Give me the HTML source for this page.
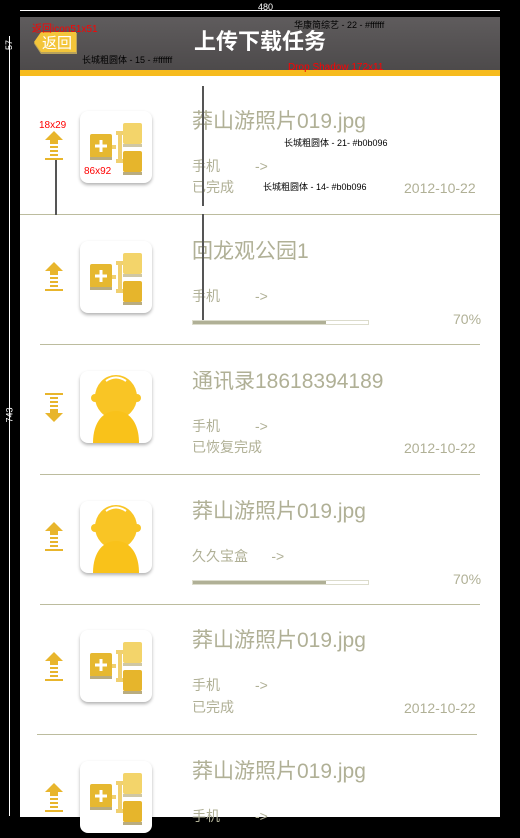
<!DOCTYPE html>
<html><head><meta charset="utf-8"><style>
*{margin:0;padding:0;box-sizing:border-box}
body{width:520px;height:817px;background:#000;position:relative;overflow:hidden;font-family:"Liberation Sans","Noto Sans CJK SC",sans-serif}
.a{position:absolute}
.panel{left:20px;top:76px;width:480px;height:741px;background:#fff}
.hdr{left:20px;top:17px;width:480px;height:53px;background:linear-gradient(#5f5c5d,#4d4a4b)}
.ybar{left:20px;top:70px;width:480px;height:6px;background:#f6bb1e}
.title{left:20px;top:27px;width:480px;text-align:center;color:#fff;font-weight:bold;font-size:22px;line-height:30px}
.back{left:33px;top:31px;width:46px;height:25px}
.t{color:#b0b096;font-size:21px;line-height:24px;white-space:nowrap}
.s{color:#b0b096;font-size:14px;line-height:16px;white-space:nowrap}
.sep{height:1px;background:#bcbc9e}
.box{width:72px;height:72px;background:#fff;border-radius:8px;box-shadow:0 2px 3px rgba(0,0,0,.3)}
.ann{font-size:9px;color:#000;white-space:nowrap}
.red{color:#f00;font-size:10px;white-space:nowrap}
.vl{width:2px;background:#555}
</style></head><body>
<div class="a panel"></div>
<div class="a hdr"></div>
<div class="a ybar"></div>
<div class="a title">上传下载任务</div>
<svg class="a back" viewBox="0 0 46 25"><path d="M8 2H44V23H8L1 12.5Z" fill="#b8a25a"/><path d="M8 1H43V21H8L1 11Z" fill="#f3c53a"/><text x="24" y="17" fill="#fff" font-size="15" text-anchor="middle" font-family="Noto Sans CJK SC">返回</text></svg>
<div class="a red" style="left:32px;top:20px">返回icon51x51</div>
<div class="a ann" style="left:294px;top:18px">华康简综艺 - 22 - #ffffff</div>
<div class="a ann" style="left:82px;top:53px">长城粗圆体 - 15 - #ffffff</div>
<div class="a red" style="left:288px;top:62px">Drop Shadow 172x11</div>
<div class="a ann" style="left:258px;top:2px;color:#fff">480</div>
<div class="a" style="left:20px;top:10px;width:480px;height:1px;background:#fff"></div>
<div class="a" style="left:9px;top:36px;width:1px;height:780px;background:#fff"></div>
<div class="a ann" style="left:4px;top:40px;color:#fff;transform:rotate(-90deg)">57</div>
<div class="a ann" style="left:2px;top:410px;color:#fff;transform:rotate(-90deg)">743</div>

<div class="a sep" style="left:20px;top:214px;width:480px"></div>
<div class="a sep" style="left:40px;top:344px;width:440px"></div>
<div class="a sep" style="left:40px;top:474px;width:440px"></div>
<div class="a sep" style="left:40px;top:604px;width:440px"></div>
<div class="a sep" style="left:37px;top:734px;width:440px"></div>

<svg width="0" height="0" style="position:absolute"><defs>
<g id="up"><path d="M9 0L18 9H13V13H5V9H0Z" fill="#e8b52c"/><rect x="5" y="15" width="8" height="2" fill="#e8b52c"/><rect x="5" y="19" width="8" height="2" fill="#e8b52c"/><rect x="5" y="23" width="8" height="2" fill="#e8b52c"/><rect x="0" y="27" width="18" height="2" fill="#e8b52c"/></g>
<g id="dn"><rect x="0" y="0" width="18" height="2" fill="#e8b52c"/><rect x="5" y="4" width="8" height="2" fill="#e8b52c"/><rect x="5" y="8" width="8" height="2" fill="#e8b52c"/><rect x="5" y="12" width="8" height="2" fill="#e8b52c"/><path d="M5 16H13V20H18L9 29L0 20H5Z" fill="#e8b52c"/></g>
<g id="net"><rect x="10" y="23" width="22" height="24" rx="2" fill="#e6b830"/><rect x="10" y="46" width="22" height="3" fill="#b9ac80"/><path d="M21 29V41M15 35H27" stroke="#fff" stroke-width="3"/><path d="M32 36H36M40 22V50M36 22H44M36 50H44" stroke="#f0d070" stroke-width="4" fill="none"/><rect x="43" y="12" width="19" height="21" rx="2" fill="#f3d46a"/><rect x="43" y="33" width="19" height="3" fill="#cfc7a4"/><rect x="43" y="40" width="19" height="21" rx="2" fill="#e6b52c"/><rect x="43" y="61" width="19" height="3" fill="#b9ac80"/></g>
<g id="man"><ellipse cx="36" cy="26" rx="21" ry="22" fill="#f9c525"/><circle cx="15" cy="27" r="4" fill="#f9c525"/><circle cx="57" cy="27" r="4" fill="#f9c525"/><path d="M13 72C13 50 24 40 36 40C48 40 59 50 59 72Z" fill="#f9c21a"/><path d="M26 10Q36 3 46 10" stroke="#fff" stroke-width="2" fill="none"/></g>
</defs></svg>

<svg class="a" style="left:45px;top:131px" width="18" height="29"><use href="#up"/></svg>
<div class="a box" style="left:80px;top:111px"><svg width="72" height="72"><use href="#net"/></svg></div>
<div class="a t" style="left:192px;top:110px">莽山游照片019.jpg</div>
<div class="a s" style="left:192px;top:158px">手机&nbsp;&nbsp;&nbsp;&nbsp;&nbsp;&nbsp;&nbsp;&nbsp;&nbsp;-&gt;</div>
<div class="a s" style="left:192px;top:179px">已完成</div>
<div class="a s" style="left:404px;top:180px">2012-10-22</div>
<div class="a red" style="left:39px;top:120px">18x29</div>
<div class="a red" style="left:84px;top:166px">86x92</div>
<div class="a ann" style="left:284px;top:136px">长城粗圆体 - 21- #b0b096</div>
<div class="a ann" style="left:263px;top:180px">长城粗圆体 - 14- #b0b096</div>
<div class="a vl" style="left:202px;top:86px;height:120px"></div>
<div class="a vl" style="left:55px;top:160px;height:55px"></div>

<svg class="a" style="left:45px;top:262px" width="18" height="29"><use href="#up"/></svg>
<div class="a box" style="left:80px;top:241px"><svg width="72" height="72"><use href="#net"/></svg></div>
<div class="a t" style="left:192px;top:240px">回龙观公园1</div>
<div class="a s" style="left:192px;top:288px">手机&nbsp;&nbsp;&nbsp;&nbsp;&nbsp;&nbsp;&nbsp;&nbsp;&nbsp;-&gt;</div>
<div class="a" style="left:192px;top:320px;width:177px;height:5px;border:1px solid #dcdccc;background:linear-gradient(90deg,#b0b096 76%,#fff 76%)"></div>
<div class="a s" style="left:453px;top:311px">70%</div>
<div class="a vl" style="left:202px;top:214px;height:106px"></div>

<svg class="a" style="left:45px;top:393px" width="18" height="29"><use href="#dn"/></svg>
<div class="a box" style="left:80px;top:371px;overflow:hidden"><svg width="72" height="72"><use href="#man"/></svg></div>
<div class="a t" style="left:192px;top:370px">通讯录18618394189</div>
<div class="a s" style="left:192px;top:418px">手机&nbsp;&nbsp;&nbsp;&nbsp;&nbsp;&nbsp;&nbsp;&nbsp;&nbsp;-&gt;</div>
<div class="a s" style="left:192px;top:439px">已恢复完成</div>
<div class="a s" style="left:404px;top:440px">2012-10-22</div>

<svg class="a" style="left:45px;top:522px" width="18" height="29"><use href="#up"/></svg>
<div class="a box" style="left:80px;top:501px;overflow:hidden"><svg width="72" height="72"><use href="#man"/></svg></div>
<div class="a t" style="left:192px;top:500px">莽山游照片019.jpg</div>
<div class="a s" style="left:192px;top:548px">久久宝盒&nbsp;&nbsp;&nbsp;&nbsp;&nbsp;&nbsp;-&gt;</div>
<div class="a" style="left:192px;top:580px;width:177px;height:5px;border:1px solid #dcdccc;background:linear-gradient(90deg,#b0b096 76%,#fff 76%)"></div>
<div class="a s" style="left:453px;top:571px">70%</div>

<svg class="a" style="left:45px;top:652px" width="18" height="29"><use href="#up"/></svg>
<div class="a box" style="left:80px;top:630px"><svg width="72" height="72"><use href="#net"/></svg></div>
<div class="a t" style="left:192px;top:629px">莽山游照片019.jpg</div>
<div class="a s" style="left:192px;top:677px">手机&nbsp;&nbsp;&nbsp;&nbsp;&nbsp;&nbsp;&nbsp;&nbsp;&nbsp;-&gt;</div>
<div class="a s" style="left:192px;top:699px">已完成</div>
<div class="a s" style="left:404px;top:700px">2012-10-22</div>

<svg class="a" style="left:45px;top:783px" width="18" height="29"><use href="#up"/></svg>
<div class="a box" style="left:80px;top:761px"><svg width="72" height="72"><use href="#net"/></svg></div>
<div class="a t" style="left:192px;top:760px">莽山游照片019.jpg</div>
<div class="a s" style="left:192px;top:808px">手机&nbsp;&nbsp;&nbsp;&nbsp;&nbsp;&nbsp;&nbsp;&nbsp;&nbsp;-&gt;</div>
</body></html>
